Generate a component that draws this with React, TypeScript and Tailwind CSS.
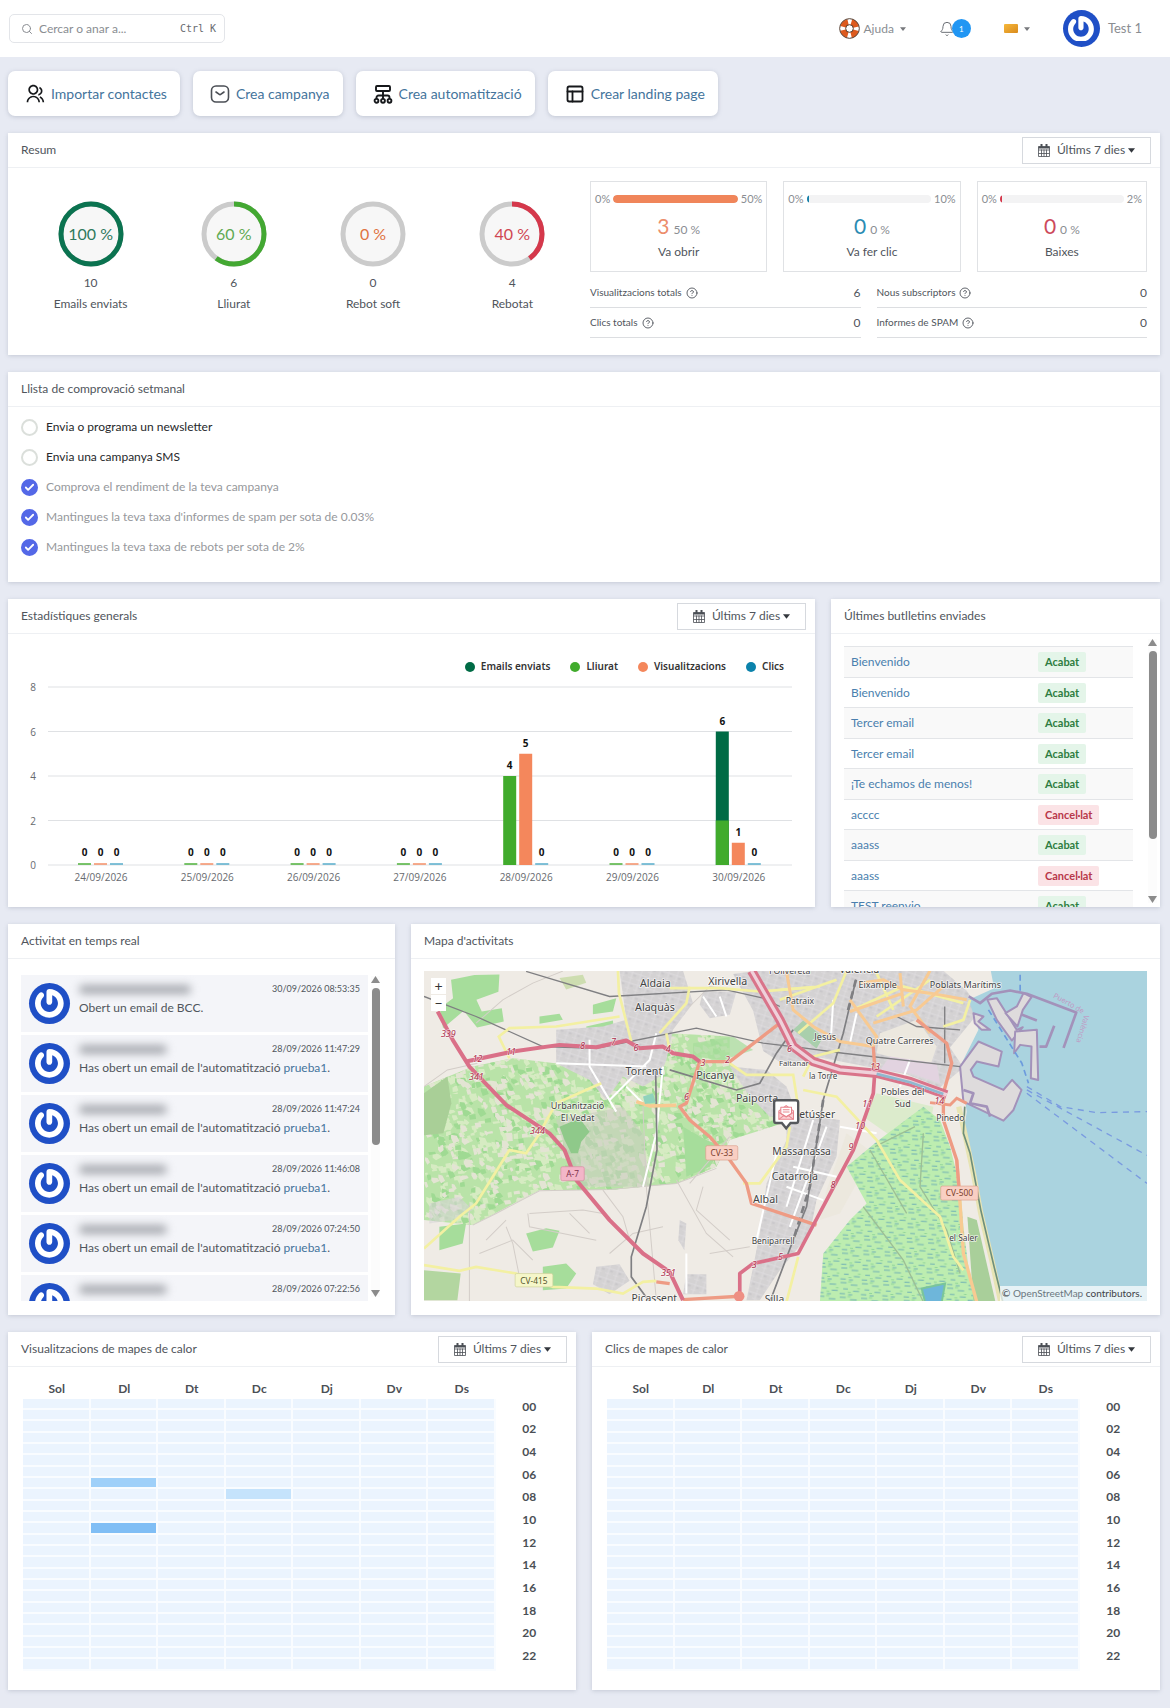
import React from "react";
import clsx from "clsx";
import { Bell, Check, CircleHelp, PanelsTopLeft, Search } from "lucide-react";
import { RiGroupLine } from "react-icons/ri";
import { SiGravatar } from "react-icons/si";

const mapFont = "'Noto Sans', sans-serif";

const gauges = [
  { label: "Emails enviats", percent: 100, total: 10, color: "#0b7350", text: "text-[#2f7a5e]" },
  { label: "Lliurat", percent: 60, total: 6, color: "#43a832", text: "text-[#5faa52]" },
  { label: "Rebot soft", percent: 0, total: 0, color: "#f0855a", text: "text-[#e0733f]" },
  { label: "Rebotat", percent: 40, total: 4, color: "#d5384b", text: "text-[#cf4653]" },
];

const rates = [
  { label: "Va obrir", max: "50%", count: 3, rate: "50 %", bar: "w-full bg-[#f0855a]", text: "text-[#ec8d6b]" },
  { label: "Va fer clic", max: "10%", count: 0, rate: "0 %", bar: "w-[2px] bg-[#1680a8]", text: "text-[#2b8bb3]" },
  { label: "Baixes", max: "2%", count: 0, rate: "0 %", bar: "w-[2px] bg-[#d5384b]", text: "text-[#cd4a5c]" },
];

const totals = [
  { label: "Visualitzacions totals", value: 6 },
  { label: "Nous subscriptors", value: 0 },
  { label: "Clics totals", value: 0 },
  { label: "Informes de SPAM", value: 0 },
];

const checklist = [
  { label: "Envia o programa un newsletter", done: false },
  { label: "Envia una campanya SMS", done: false },
  { label: "Comprova el rendiment de la teva campanya", done: true },
  { label: "Mantingues la teva taxa d'informes de spam per sota de 0.03%", done: true },
  { label: "Mantingues la teva taxa de rebots per sota de 2%", done: true },
];

const newsletters = [
  { name: "Bienvenido", ok: true },
  { name: "Bienvenido", ok: true },
  { name: "Tercer email", ok: true },
  { name: "Tercer email", ok: true },
  { name: "¡Te echamos de menos!", ok: true },
  { name: "acccc", ok: false },
  { name: "aaass", ok: true },
  { name: "aaass", ok: false },
  { name: "TEST reenvio", ok: true },
];

const activity = [
  { date: "30/09/2026 08:53:35", text: "Obert un email de BCC.", link: "" },
  { date: "28/09/2026 11:47:29", text: "Has obert un email de l'automatització ", link: "prueba1" },
  { date: "28/09/2026 11:47:24", text: "Has obert un email de l'automatització ", link: "prueba1" },
  { date: "28/09/2026 11:46:08", text: "Has obert un email de l'automatització ", link: "prueba1" },
  { date: "28/09/2026 07:24:50", text: "Has obert un email de l'automatització ", link: "prueba1" },
  { date: "28/09/2026 07:22:56", text: "Has obert un email de l'automatització ", link: "prueba1" },
];

const chartDays = [
  { date: "24/09/2026", sent: 0, delivered: 0, views: 0, clicks: 0 },
  { date: "25/09/2026", sent: 0, delivered: 0, views: 0, clicks: 0 },
  { date: "26/09/2026", sent: 0, delivered: 0, views: 0, clicks: 0 },
  { date: "27/09/2026", sent: 0, delivered: 0, views: 0, clicks: 0 },
  { date: "28/09/2026", sent: 4, delivered: 4, views: 5, clicks: 0 },
  { date: "29/09/2026", sent: 0, delivered: 0, views: 0, clicks: 0 },
  { date: "30/09/2026", sent: 6, delivered: 2, views: 1, clicks: 0 },
];

const legend = [
  { label: "Emails enviats", color: "bg-[#006b45]" },
  { label: "Lliurat", color: "bg-[#41ab2c]" },
  { label: "Visualitzacions", color: "bg-[#f4875c]" },
  { label: "Clics", color: "bg-[#0b82ab]" },
];

const weekDays = ["Sol", "Dl", "Dt", "Dc", "Dj", "Dv", "Ds"];

function Caret({ className }: { className?: string }) {
  return (
    <svg viewBox="0 0 8 5" className={clsx("shrink-0", className)} fill="currentColor" aria-hidden="true">
      <path d="M0 0h8L4 5z" />
    </svg>
  );
}

function RangeButton() {
  return (
    <button type="button" className="flex h-[27px] w-[129px] items-center justify-center border border-[#d6d9de] bg-white text-[12px] text-[#50555c]">
      <svg viewBox="0 0 12 13" className="mr-[7px] h-[13px] w-3" fill="none" stroke="#4b4f55" aria-hidden="true">
        <path d="M.5 2.500h11v10H.5zM.5 6h11M.5 9.500h11M3.500 5.500v7M6 5.500v7M8.500 5.500v7" strokeWidth=".8" />
        <path d="M.5 3.500h11" strokeWidth="2" />
        <path d="M3.500 0v4M8.500 0v4" strokeWidth="2" />
      </svg>
      Últims 7 dies
      <Caret className="ml-[3px] h-[5px] w-[7px] text-[#33373d]" />
    </button>
  );
}

type CardProps = {
  title: string;
  range?: boolean;
  className?: string;
  children: React.ReactNode;
};

function Card({ title, range, className, children }: CardProps) {
  return (
    <section className={clsx("flex min-w-0 flex-col bg-white shadow-[0_1px_4px_rgba(120,130,150,0.3)]", className)}>
      <header className="flex h-[35px] shrink-0 items-center justify-between border-b border-[#eef0f3] pr-[9px] pl-[13px]">
        <h2 className="text-[12px] text-[#50555c]">{title}</h2>
        {range && <RangeButton />}
      </header>
      {children}
    </section>
  );
}

function Avatar({ className }: { className: string }) {
  return (
    <span className={clsx("flex shrink-0 items-center justify-center rounded-full bg-[#1f4fc6] text-white", className)}>
      <SiGravatar className="h-[70%] w-[70%]" />
    </span>
  );
}

function ScrollRail({ thumb }: { thumb: string }) {
  return (
    <div className="flex w-[9px] shrink-0 flex-col items-center bg-[#fcfcfc] text-[#8b8b8b]" aria-hidden="true">
      <svg viewBox="0 0 9 7" className="h-[7px] w-[9px]" fill="currentColor">
        <path d="M4.500 0 9 7H0z" />
      </svg>
      <div className={clsx("mt-[5px] w-[8px] rounded-full bg-[#8b8b8b]", thumb)} />
      <svg viewBox="0 0 9 7" className="mt-auto h-[7px] w-[9px]" fill="currentColor">
        <path d="M0 0h9L4.500 7z" />
      </svg>
    </div>
  );
}

function TopBar() {
  return (
    <header className="flex h-[57px] items-center justify-between bg-white pr-[28px] pl-[9px] text-[13px] text-[#8a8d92]">
      <label className="flex h-[29px] w-[216px] items-center rounded-[5px] border border-[#e3e5e9] pr-2 pl-[11px]">
        <Search className="h-3 w-3 shrink-0 text-[#8a8d92]" strokeWidth={2} />
        <input
          type="text"
          aria-label="Cercar"
          placeholder="Cercar o anar a..."
          className="ml-[6px] min-w-0 flex-1 bg-transparent text-[12px] outline-none placeholder:text-[#8a8d92]"
        />
        <kbd className="font-['DejaVu_Sans_Mono',monospace] text-[10px] text-[#676b70]">Ctrl K</kbd>
      </label>
      <nav className="flex items-center">
        <button type="button" className="flex items-center text-[12px]">
          <svg viewBox="0 0 22 22" className="mr-1 h-[21px] w-[21px]" aria-hidden="true">
            <circle cx="11" cy="11" r="7" fill="none" stroke="#fff" strokeWidth="6" />
            <circle cx="11" cy="11" r="7" fill="none" stroke="#dd5a1e" strokeWidth="6" strokeDasharray="7.4 3.600" strokeDashoffset="-1.800" />
            <circle cx="11" cy="11" r="10.300" fill="none" stroke="#4d3528" strokeWidth="1" />
            <circle cx="11" cy="11" r="4" fill="none" stroke="#4d3528" strokeWidth="1" />
          </svg>
          Ajuda
          <Caret className="ml-[6px] h-1 w-[6px] text-[#77797d]" />
        </button>
        <button type="button" aria-label="Notificacions" className="ml-[33px] flex items-center">
          <Bell className="h-4 w-4 text-[#6c7076]" strokeWidth={1.5} />
          <span className="-ml-[3px] flex h-[19px] w-[19px] items-center justify-center rounded-full bg-[#2196f3] text-[8px] text-white">1</span>
        </button>
        <button type="button" aria-label="Idioma" className="ml-[33px] flex items-center">
          <span className="h-[9px] w-[14px] rounded-[1px] bg-linear-to-br from-[#f6b83a] to-[#d98a1c]" />
          <Caret className="ml-[6px] h-1 w-[6px] text-[#77797d]" />
        </button>
        <button type="button" className="ml-[33px] flex items-center">
          <Avatar className="mr-2 h-[37px] w-[37px]" />
          Test 1
        </button>
      </nav>
    </header>
  );
}

function QuickActions() {
  const action =
    "flex h-[45px] items-center gap-[6px] rounded-[7px] bg-white pr-[13px] pl-[17px] text-[14px] text-[#44749c] shadow-[0_1px_4px_rgba(120,130,150,0.35)]";
  return (
    <div className="flex gap-[13px]">
      <a href="#import" className={action}>
        <RiGroupLine className="h-5 w-5 text-[#16181b]" />
        Importar contactes
      </a>
      <a href="#campaign" className={action}>
        <svg viewBox="0 0 20 20" className="h-5 w-5" fill="none" stroke="#4b4f55" strokeWidth="1.600" strokeLinecap="round" aria-hidden="true">
          <rect x="1.500" y="2" width="17" height="16" rx="4.500" />
          <path d="m6 8 3 2.200c.6.500 1.400.5 2 0L14 8" />
        </svg>
        Crea campanya
      </a>
      <a href="#automation" className={action}>
        <svg viewBox="0 0 20 20" className="h-5 w-5" fill="none" stroke="#16181b" strokeWidth="1.900" aria-hidden="true">
          <rect x="3" y="2" width="14" height="5" rx="1" />
          <path d="M10 7v8M3.500 15v-1.500a2 2 0 0 1 2-2h9a2 2 0 0 1 2 2V15" />
          <circle cx="3.500" cy="16.800" r="1.900" />
          <circle cx="10" cy="16.800" r="1.900" />
          <circle cx="16.500" cy="16.800" r="1.900" />
        </svg>
        Crea automatització
      </a>
      <a href="#landing" className={action}>
        <PanelsTopLeft className="h-5 w-5 text-[#16181b]" strokeWidth={2.2} />
        Crear landing page
      </a>
    </div>
  );
}

function Gauge({ percent, color, text }: { percent: number; color: string; text: string }) {
  const length = 2 * Math.PI * 30;
  return (
    <div className="relative flex h-[66px] w-[66px] items-center justify-center">
      <svg viewBox="0 0 66 66" className="absolute inset-0 -rotate-90" aria-hidden="true">
        <circle cx="33" cy="33" r="30" fill="#f7f7f7" stroke="#cbcbcb" strokeWidth="5" />
        {percent > 0 && (
          <circle cx="33" cy="33" r="30" fill="none" stroke={color} strokeWidth="5" strokeDasharray={`${(length * percent) / 100} ${length}`} />
        )}
      </svg>
      <span className={clsx("relative text-[16px]", text)}>{percent} %</span>
    </div>
  );
}

function Summary() {
  return (
    <Card title="Resum" range>
      <div className="flex pt-[13px] pr-[13px] pb-[17px] pl-[9px]">
        <div className="flex flex-1 items-start justify-around pt-5">
          {gauges.map((g) => (
            <div key={g.label} className="flex flex-col items-center text-[12px] text-[#50555c]">
              <Gauge percent={g.percent} color={g.color} text={g.text} />
              <p className="mt-[6px] leading-5">{g.total}</p>
              <p className="leading-[22px]">{g.label}</p>
            </div>
          ))}
        </div>
        <div className="w-1/2 shrink-0 pl-2">
          <div className="grid grid-cols-[177fr_177fr_170fr] gap-4">
            {rates.map((r) => (
              <div key={r.label} className="flex h-[91px] flex-col items-center border border-[#e0e2e5] px-1 pt-[9px]">
                <div className="flex w-full items-center gap-[3px] text-[11px] leading-4 text-[#8a8d92]">
                  0%
                  <div className="h-2 flex-1 overflow-hidden rounded-full bg-[#f3f3f4]">
                    <div className={clsx("h-full rounded-full", r.bar)} />
                  </div>
                  {r.max}
                </div>
                <p className="mt-[7px] flex items-baseline gap-1 leading-6 text-[#8a8d92]">
                  <span className={clsx("text-[21px]", r.text)}>{r.count}</span>
                  <span className="text-[12px]">{r.rate}</span>
                </p>
                <p className="text-[12px] leading-5 text-[#50555c]">{r.label}</p>
              </div>
            ))}
          </div>
          <dl className="mt-[6px] grid grid-cols-2 gap-x-4 text-[#50555c]">
            {totals.map((t) => (
              <div key={t.label} className="flex h-[30px] items-center border-b border-[#dcdee1]">
                <dt className="flex items-center gap-1 text-[10px]">
                  {t.label}
                  <CircleHelp className="h-3 w-3" strokeWidth={1.8} />
                </dt>
                <dd className="ml-auto text-[12px]">{t.value}</dd>
              </div>
            ))}
          </dl>
        </div>
      </div>
    </Card>
  );
}

function Checklist() {
  return (
    <Card title="Llista de comprovació setmanal">
      <ul className="px-[13px] pt-[5px] pb-5 text-[12px]">
        {checklist.map((item) => (
          <li key={item.label} className="flex h-[30px] items-center">
            <label className="flex items-center gap-2">
              <span className="grid place-items-center">
                <input
                  type="checkbox"
                  defaultChecked={item.done}
                  className="peer col-start-1 row-start-1 h-[17px] w-[17px] appearance-none rounded-full border-2 border-[#dbdfdb] checked:border-[#5468e7] checked:bg-[#5468e7]"
                />
                <Check className="pointer-events-none invisible col-start-1 row-start-1 h-[11px] w-[11px] text-white peer-checked:visible" strokeWidth={4} />
              </span>
              <span className={item.done ? "text-[#96989c]" : "text-[#26282b]"}>{item.label}</span>
            </label>
          </li>
        ))}
      </ul>
    </Card>
  );
}

function Bar({ x, value, color }: { x: number; value: number; color: string }) {
  const height = value === 0 ? 2 : value * 22.25;
  return (
    <>
      <rect x={x} y={194 - height} width="13" height={height} fill={color} opacity={value === 0 ? 0.7 : 1} />
      <text x={x + 6.5} y={187 - height} textAnchor="middle" fontSize="10" fontWeight="700" fill="#111">
        {value}
      </text>
    </>
  );
}

function StatsChart() {
  return (
    <svg viewBox="0 8 781 207" className="w-full font-['Open_Sans',sans-serif]" role="img" aria-label="Estadístiques generals">
      {[8, 6, 4, 2, 0].map((tick, i) => (
        <g key={tick}>
          <path d={`M27 ${16 + i * 44.5}H771`} stroke="#dfe1e4" />
          <text x="12" y={20 + i * 44.5} textAnchor="middle" fontSize="10" fill="#66696e">
            {tick}
          </text>
        </g>
      ))}
      {chartDays.map((d, i) => {
        const center = 80 + i * 106.3;
        return (
          <g key={d.date}>
            <Bar x={center - 23} value={d.sent} color={d.sent > d.delivered ? "#006b45" : "#41ab2c"} />
            {d.sent > d.delivered && (
              <rect x={center - 23} y={194 - d.delivered * 22.25} width="13" height={d.delivered * 22.25} fill="#41ab2c" />
            )}
            <Bar x={center - 7} value={d.views} color="#f4875c" />
            <Bar x={center + 9} value={d.clicks} color="#4ba6c8" />
            <text x={center} y="210" textAnchor="middle" fontSize="10" fill="#66696e">
              {d.date}
            </text>
          </g>
        );
      })}
    </svg>
  );
}

function GeneralStats() {
  return (
    <Card title="Estadístiques generals" range className="h-[308px]">
      <div className="px-[13px] pt-5">
        <ul className="flex h-[25px] items-center justify-end gap-5 pr-[18px] font-['Noto_Sans',sans-serif] text-[10px] font-semibold text-[#333]">
          {legend.map((l) => (
            <li key={l.label} className="flex items-center gap-[6px]">
              <span className={clsx("h-[10px] w-[10px] rounded-full", l.color)} />
              {l.label}
            </li>
          ))}
        </ul>
        <StatsChart />
      </div>
    </Card>
  );
}

function LatestNewsletters() {
  return (
    <Card title="Últimes butlletins enviades" className="h-[308px]">
      <div className="flex min-h-0 flex-1 pr-[3px] pl-[13px]">
        <div className="flex-1 overflow-hidden pt-3 pr-[15px]">
          <table className="w-full text-[12px]">
            <tbody>
              {newsletters.map((n, i) => (
                <tr key={i} className="border-t border-[#e3e5e8] odd:h-[31px] odd:bg-[#f9f9f9] even:h-[30px]">
                  <td className="py-0 pl-[7px]">
                    <a href="#newsletter" className="text-[#4a7fae]">
                      {n.name}
                    </a>
                  </td>
                  <td className="w-[95px] py-0">
                    <span
                      className={clsx(
                        "inline-block rounded-[2px] px-[7px] text-[11px] leading-5 font-bold",
                        n.ok ? "bg-[#e4f5e9] text-[#2e7d41]" : "bg-[#fbe3e6] text-[#b8384a]"
                      )}
                    >
                      {n.ok ? "Acabat" : "Cancel·lat"}
                    </span>
                  </td>
                </tr>
              ))}
            </tbody>
          </table>
        </div>
        <div className="flex pt-[5px] pb-1">
          <ScrollRail thumb="h-[188px]" />
        </div>
      </div>
    </Card>
  );
}

function LiveActivity() {
  return (
    <Card title="Activitat en temps real" className="h-[391px]">
      <div className="flex min-h-0 flex-1 pt-4 pr-[15px] pb-[14px] pl-[13px]">
        <ul className="min-w-0 flex-1 overflow-hidden">
          {activity.map((a) => (
            <li key={a.date} className="mb-[3px] flex h-[57px] bg-[#f4f5f9] pt-2 pr-2 pl-2">
              <Avatar className="h-[41px] w-[41px]" />
              <div className="min-w-0 flex-1 pl-[9px] text-[#50555c]">
                <div className="flex items-center justify-between">
                  <span className={clsx("h-[9px] rounded-full bg-[#a6a9af] blur-[4px]", a.link ? "w-[88px]" : "w-[112px]")} />
                  <time className="text-[9px] leading-3">{a.date}</time>
                </div>
                <p className="mt-[3px] text-[12px] leading-5">
                  {a.text}
                  {a.link && (
                    <>
                      <a href="#prueba1" className="text-[#44749c]">{a.link}</a>.
                    </>
                  )}
                </p>
              </div>
            </li>
          ))}
        </ul>
        <div className="flex pt-px pb-1 pl-[3px]">
          <ScrollRail thumb="h-[157px]" />
        </div>
      </div>
    </Card>
  );
}

// fixed seed so that fields fall on the same spots on every render
function scatter(count: number, seed: number, box: number[]) {
  let s = seed;
  const next = () => {
    s = (s * 16807) % 2147483647;
    return s / 2147483647;
  };
  return Array.from({ length: count }, () => {
    const x = Math.round(box[0] + next() * box[2]);
    const y = Math.round(box[1] + next() * box[3]);
    const a = Math.round(6 + next() * 14);
    const b = Math.round(5 + next() * 12);
    const c = Math.round(next() * 10);
    return `M${x} ${y}l${a} ${c - 5}l${c} ${b}l${-a} ${c}l${-c} ${-b}z`;
  }).join("");
}

const fieldsLight = scatter(1100, 77, [44, 330, 1060, 640]);
const fieldsCream = scatter(600, 1234, [44, 330, 1060, 640]);
const fieldsDark = scatter(550, 991, [44, 330, 1060, 640]);

const places: [string, number, number, number][] = [
  ["Aldaia", 737, 203, 32],
  ["Xirivella", 954, 195, 32],
  ["Alaquàs", 736, 273, 32],
  ["Torrent", 703, 464, 32],
  ["Picanya", 917, 477, 32],
  ["Paiporta", 1042, 546, 32],
  ["Urbanització", 504, 568, 27],
  ["El Vedat", 504, 604, 27],
  ["Massanassa", 1175, 705, 31],
  ["Catarroja", 1155, 780, 32],
  ["Albal", 1067, 849, 32],
  ["Beniparrell", 1090, 973, 25],
  ["Picassent", 734, 1146, 31],
  ["Silla", 1094, 1148, 31],
  ["l'Olivereta", 1140, 162, 26],
  ["València", 1348, 160, 31],
  ["Patraix", 1170, 253, 26],
  ["Eixample", 1403, 205, 27],
  ["Poblats Marítims", 1666, 205, 27],
  ["Jesús", 1246, 359, 27],
  ["Quatre Carreres", 1469, 371, 27],
  ["Faitanar", 1152, 439, 23],
  ["la Torre", 1240, 477, 24],
  ["Pobles del", 1478, 525, 27],
  ["Sud", 1478, 560, 27],
  ["etússer", 1222, 593, 31],
  ["Pinedo", 1621, 603, 26],
  ["el Saler", 1660, 962, 25],
];

const exits: [string, number, number][] = [
  ["339", 117, 350],
  ["12", 204, 427],
  ["341", 201, 480],
  ["11", 305, 405],
  ["8", 519, 387],
  ["7", 612, 375],
  ["6", 679, 393],
  ["4", 776, 396],
  ["3", 880, 437],
  ["2", 953, 428],
  ["6", 830, 540],
  ["344", 384, 641],
  ["351", 776, 1066],
  ["3", 1033, 1042],
  ["5", 1112, 1020],
  ["6", 1139, 395],
  ["13", 1395, 450],
  ["11", 1372, 562],
  ["10", 1350, 628],
  ["9", 1323, 690],
  ["8", 1269, 804],
  ["14", 1588, 552],
];

const shields = [
  { label: "A-7", x: 454, y: 740, w: 70, h: 42, fill: "#f3b6c8", stroke: "#d98aa2", text: "#80304a" },
  { label: "CV-33", x: 888, y: 677, w: 96, h: 43, fill: "#f9cfc3", stroke: "#dba08d", text: "#7a3d2c" },
  { label: "CV-415", x: 317, y: 1060, w: 113, h: 40, fill: "#f5f6c9", stroke: "#cfd19a", text: "#55572c" },
  { label: "CV-500", x: 1592, y: 798, w: 112, h: 42, fill: "#f9cfc3", stroke: "#dba08d", text: "#7a3d2c" },
];

function StreetMap() {
  return (
    <svg viewBox="44 153 2166 990" preserveAspectRatio="xMidYMid slice" className="h-full w-full" role="img" aria-label="Mapa de València">
      <defs>
        <clipPath id="orchard">
          <path d="M44 500 190 440 310 415 520 440 590 500 700 420 780 340 960 350 960 430 1010 480 1120 560 1150 600 960 660 920 740 800 790 600 810 390 810 190 915 44 900Z" />
        </clipPath>
        <pattern id="streets" width="26" height="32" patternUnits="userSpaceOnUse" patternTransform="rotate(18)">
          <rect width="26" height="32" fill="#d4d2d3" />
          <path d="M0 8h26M9 0v32M0 24h16" stroke="#e0dedf" strokeWidth="2" />
          <path d="M14 12h8v6h-8z" fill="#cac8cb" />
        </pattern>
        <pattern id="marsh" width="64" height="44" patternUnits="userSpaceOnUse" patternTransform="rotate(3)">
          <rect width="64" height="44" fill="#bdedb0" />
          <path d="M3 6h18M34 12h20M12 24h14M42 30h18M2 39h16M28 41h12" stroke="#6fb0b4" strokeWidth="3" />
          <path d="M26 3h10M54 22h8M26 34h9" stroke="#92d69a" strokeWidth="3" />
        </pattern>
      </defs>

      <rect x="44" y="153" width="2166" height="992" fill="#efebe5" />

      {/* orchards and woods */}
      <g clipPath="url(#orchard)">
        <rect x="44" y="330" width="1110" height="600" fill="#b9e3a8" />
        <path d={fieldsLight} fill="#d6ebc2" />
        <path d={fieldsDark} fill="#9fda93" />
        <path d={fieldsCream} fill="#e3e4d3" />
        <path d="M440 600 640 560 700 640 720 800 520 800 470 700Z" fill="#c9cfbf" opacity=".6" />
      </g>
      <g fill="#a6dd9b">
        <path d="M125 180l70-14 75-2-3 52-66 24 16 35 60-10 6 40-80 18-40-50-62 52-10-60 40-30z" />
        <path d="M550 255l70-20-10 40-60 8zM390 290l60-8 10 18-70 12zM530 320l80-18 2 24-80 10z" />
        <path d="M350 940l60-16 40 8-20 50-60 12z" />
        <path d="M90 920l80-10-10 60-70 20zM400 1040l70-10 30 30-30 45-70 5z" />
        <path d="M820 620l70 40 50 20-40 60-70 30z" />
        <path d="M850 370l120-20 60 40-90 30-90-10z" opacity=".7" />
      </g>
      <path d="M44 520l70-50 12 80-24 90-58 6z" fill="#a9cf97" />
      <path d="M450 620l60-25 30 40-25 30-10 35h-20l-20-40z" fill="#8fc98a" />
      <path d="M44 1050l110 10-10 80H44z" fill="#b3d6a0" />
      <path d="M450 175l70-10 10 24-60 20z" fill="#cdddb0" />

      {/* built-up areas */}
      <g fill="url(#streets)">
        <path d="M630 153H820L850 250 790 330 770 420 750 470 700 500 640 470 590 540 540 480 440 430 440 330 580 320 650 300Z" />
        <path d="M880 215h100l-20 70-60 10-30-40z" />
        <path d="M1040 153H1600l70 60 40 60-90 110 40 60-70 60-100-40-260-50-110 20-60-40-30-120-60-110z" />
        <path d="M960 440l110 10 60 50 30 80-80 10-60-60z" />
        <path d="M1130 580l160 20-10 110-60 130-20 100-90 110-60 90h-40l40-200 20-150 60-130z" />
        <path d="M830 1062h60v60h-70zM560 1040l70-8 30 50-60 40-50-30z" />
        <path d="M60 850l90-20 40 40-60 30-70 10z" opacity=".6" />
        <path d="M810 900l20 10-6 80-18-30z" />
      </g>

      {/* parks and light fields near the city */}
      <path d="M1410 340l110-40 60 80-20 60-160-40z" fill="#ece8df" />
      <path d="M1150 330l30-28 60 50-20 34z" fill="#a9cfac" />
      <path d="M1440 410l140 20 10 60-90-30-90-10z" fill="#e2d3e0" />
      <path d="M1400 520l170 40-10 60-100 40-100-70z" fill="#dcebcc" />
      <path d="M1310 640l80 60-100 180-60 20 20-90z" fill="#ece8de" />

      {/* marsh */}
      <path d="M1310 740 1400 665 1460 620 1540 560 1590 600 1620 680 1650 800 1660 920 1680 1080 1700 1145 1230 1145 1240 1000 1320 900 1370 850Z" fill="url(#marsh)" />
      <path d="M1395 680l120-60M1380 690l110 190M1360 860l120 160 60 125M1540 640l-10 160 80 130 40 130" stroke="#9dbf95" strokeWidth="4" fill="none" />
      <path d="M1535 1105l70-15-10 55h-50z" fill="#6eb6da" stroke="#7ac59a" strokeWidth="6" />

      {/* sea and coast */}
      <path d="M1742 153 1752 205 1676 240 1705 330 1650 440 1670 575 1660 640 1680 700 1710 870 1750 1040 1776 1145H2210V153Z" fill="#aad3df" />
      <path d="M1646 560 1664 640 1690 760 1712 880 1745 1020 1772 1145" stroke="#e7e4b4" strokeWidth="16" fill="none" />
      <path d="M1664 560 1660 640 1680 700 1712 870 1752 1040 1778 1145" stroke="#6f8f7a" strokeWidth="5" fill="none" />
      <path d="M1672 890 1700 900 1756 1145 1690 1145Z" fill="#a9cf9a" />

      {/* harbour */}
      <g fill="#dedbdc" stroke="#a392ba" strokeWidth="6" strokeLinejoin="round">
        <path d="M1732 240 1760 235 1820 330 1838 322 1805 362 1760 300Z" />
        <path d="M1786 280 1820 260 1840 220 1864 232 1838 270 1822 320Z" />
        <path d="M1690 280 1720 290 1705 305 1740 330 1715 330 1694 310Z" />
        <path d="M1650 440 1705 365 1775 395 1765 440 1700 425 1682 450 1690 470 1780 510 1806 480 1834 510 1810 570 1780 602 1660 545Z" />
        <path d="M1815 335 1880 330 1884 480 1862 475 1864 380 1830 375 1812 400Z" />
      </g>
      <g fill="none" stroke="#a392ba" strokeWidth="8" strokeLinejoin="round">
        <path d="M1676 230 1710 250 1745 222 1800 212 1850 222 1998 278 1960 384" />
        <path d="M1834 284 1880 302M1932 318 1908 380 1888 380" />
        <path d="M1660 510 1690 520 1680 550 1730 560 1740 590" />
      </g>
      <path d="M1830 165v60M1735 270l100 160 20 60" stroke="#6c9bdd" strokeWidth="5" strokeDasharray="18 12" fill="none" />
      <path d="M1850 500 1950 560 2060 578 2210 575M1850 510 2210 706M1850 520 2210 790" stroke="#7a9be0" strokeWidth="4" strokeDasharray="18 16" fill="none" />
      <path id="pier" d="M1928 232 2022 285 1995 375" fill="none" />
      <text fontSize="22" fill="#c099c4" fontFamily={mapFont}>
        <textPath href="#pier">Puerto de València</textPath>
      </text>

      {/* minor roads */}
      <g fill="none" stroke="#d3cdc8" strokeWidth="3">
        <path d="M190 915 260 880 390 812 600 808 800 790 920 745M290 920l20 50 20 100M360 880l160-10 60 10M355 880l5 40 200 40M580 810l60 80 20 70M800 780l90 160 80 70M880 800l-20 70 100 90M210 1000l100-40 60 60M180 850v295M700 560l10 240 30 340M960 650l-120 140M230 960l60-60M480 880l60 60" />
        <path d="M200 310l80-70 90-50 90-36M44 500l70-50 90-20M840 260l60-60 60 10M600 1000l70-60 90-20M900 1000l120-20" />
      </g>
      <g fill="none" stroke="#fff" strokeWidth="6">
        <path d="M540 360v80l80 135M600 540l120-120 20-80M650 500l50 50M760 440l-20 200-40 160M440 430l270 10M1210 600l-80 260M1250 620l-110 300M1130 800l110 40M1150 740l130 30M880 230l40 60M930 230l20 60M1100 700l-60 260M830 1000v120M1320 370l20-90M1500 420l-30 80M1270 240l-6 100M1290 620l110 20" />
      </g>

      {/* railways */}
      <g fill="none" stroke="#7f7f82">
        <path d="M350 155 600 230 950 210 1060 235 1110 260M44 230 200 290 400 380 560 385 860 325 1060 370 1180 384 1300 400 1650 440" strokeWidth="4" />
        <path d="M738 450 742 690 710 860 665 1010 665 1070 720 1145M780 450 980 510 1050 490 1100 400 1150 330" strokeWidth="5" />
        <path d="M1338 180 1300 340 1240 540 1225 640 1190 860 1150 960 1080 1145" strokeWidth="5" />
        <path d="M1338 180 1312 280M1240 540 1200 800 1150 960" strokeWidth="8" strokeDasharray="22 14" />
        <path d="M1604 260v170M1460 290l60 30 130 10" strokeWidth="4" />
      </g>

      {/* yellow roads */}
      <g fill="none" stroke="#f3f0a2" strokeWidth="8">
        <path d="M625 153 628 220 665 365M630 290 440 320 300 325 268 350 290 395 300 415M840 200 830 250 750 340M780 205h150l120 10 150-12M770 340l10 50M575 490 440 550 384 650 350 700 300 690 200 850 150 890 44 985" />
        <path d="M44 1035 150 1052 200 1040 320 1060 430 1100 560 1105 640 1120 700 1085 740 1082M960 430 1010 465 1150 465 1165 560M1140 620 1130 680 1050 790 1000 790" />
        <path d="M1165 340 1270 250 1310 153M1180 470 1210 410 1290 390M1180 510 1280 530 1400 660 1470 780 1590 890 1630 1010 1660 1050M1165 1010 1130 1145" />
        <path d="M1110 210 1230 200M1110 240 1280 180M1330 270 1480 200 1660 250M1400 290 1560 180M1450 270 1400 160M1600 320 1660 300 1680 240" />
      </g>

      {/* orange roads */}
      <g fill="none" stroke="#f8ca92" strokeWidth="9">
        <path d="M1130 155 1150 270 1210 320 1290 365 1390 380M1320 240 1400 350 1390 380M1350 190 1420 180 1480 210 1560 220 1670 240M1320 275 1480 220M1390 310 1520 270 1600 200M1470 160 1480 260M1560 153 1500 260 1560 340" />
        <path d="M680 545 720 558 800 556M1640 720 1650 850 1660 1000 1700 1145" strokeWidth="10" />
      </g>

      {/* trunk roads */}
      <g fill="none" stroke="#ee9b84" strokeWidth="10" strokeLinejoin="round">
        <path d="M870 425 960 425 1110 310M870 425 830 550 810 560 840 600 900 650 960 720 1010 790 1025 850 1220 915M740 1085 780 1090M820 1138 990 1128" />
        <path d="M1520 300 1610 370 1625 430 1600 520 1600 600 1640 720 1650 840M1390 380 1395 450" />
      </g>

      {/* motorways */}
      <g fill="none" stroke="#da7088" strokeWidth="12" strokeLinejoin="round">
        <path d="M85 275 130 360 180 440 290 555 420 640 465 690 500 780 600 900 700 1000 780 1055 820 1140" />
        <path d="M170 425 310 395 450 375 560 382 650 362 690 385 760 380 790 400 850 410 870 425" />
        <path d="M990 1135 990 1060 1030 1030 1165 1000 1330 690 1390 520 1395 450" strokeWidth="11" />
      </g>
      <g fill="none" stroke="#d9748a">
        <path d="M1025 153 1110 300 1150 380 1210 425 1290 450 1400 460 1500 485 1610 525" strokeWidth="28" />
        <path d="M1025 153 1110 300 1150 380 1210 425 1290 450 1400 460 1500 485 1610 525" stroke="#efd1da" strokeWidth="10" />
        <path d="M1400 462 1500 487 1600 522" stroke="#8fb8cf" strokeWidth="8" />
      </g>
      <path d="M1560 548 1620 555 1640 535 1670 550" stroke="#ee9b84" strokeWidth="9" fill="none" />
      <circle cx="988" cy="1128" r="16" fill="#ee8f83" />
      <path d="M700 530l30-10 8 28-32 4z" fill="#8fd3bb" />

      <g fontFamily={mapFont} fill="#444" textAnchor="middle" stroke="#fff" strokeWidth="5" strokeOpacity=".7" paintOrder="stroke" strokeLinejoin="round">
        {places.map(([name, x, y, size]) => (
          <text key={name} x={x} y={y} fontSize={size}>
            {name}
          </text>
        ))}
      </g>
      <g fontFamily={mapFont} fill="#ab2f4c" fontSize="27" fontStyle="italic" textAnchor="middle" stroke="#fff" strokeWidth="4" strokeOpacity=".6" paintOrder="stroke">
        {exits.map(([name, x, y]) => (
          <text key={`${name}-${x}`} x={x} y={y}>
            {name}
          </text>
        ))}
      </g>
      {shields.map((s) => (
        <g key={s.label}>
          <rect x={s.x} y={s.y} width={s.w} height={s.h} rx="5" fill={s.fill} stroke={s.stroke} strokeWidth="2" />
          <text x={s.x + s.w / 2} y={s.y + 30} fontSize="25" fontFamily={mapFont} fill={s.text} textAnchor="middle">
            {s.label}
          </text>
        </g>
      ))}

      {/* opened email marker */}
      <path d="M1100 541h58q7 0 7 7v54q0 7-7 7h-16l-13 16-13-16h-16q-7 0-7-7v-54q0-7 7-7z" fill="#fff" stroke="#55585c" strokeWidth="7" />
      <g fill="#fbd3d6" stroke="#e8858e" strokeWidth="3" strokeLinejoin="round">
        <path d="M1107 573l22-16 22 16v25h-44z" />
        <path d="M1113 562h32v18l-16 10-16-10z" fill="#fff" />
        <path d="M1107 577l22 14 22-14M1107 598l16-12M1151 598l-16-12M1119 569h20M1119 576h20" fill="none" />
      </g>
    </svg>
  );
}

function ActivityMap() {
  return (
    <Card title="Mapa d'activitats" className="h-[391px]">
      <div className="relative mx-[13px] mt-3 h-[330px] overflow-hidden">
        <StreetMap />
        <div className="absolute top-[7px] left-[7px] flex flex-col gap-px text-[14px] leading-4 text-[#333]">
          <button type="button" aria-label="Apropar" className="h-4 w-[15px] bg-white">+</button>
          <button type="button" aria-label="Allunyar" className="h-4 w-[15px] bg-white">−</button>
        </div>
        <p className="absolute right-0 bottom-0 bg-white/70 pr-[5px] pl-[2px] text-[10px] leading-[15px] text-[#3e4247]">
          © <a href="#osm" className="text-[#6b7780]">OpenStreetMap</a> contributors.
        </p>
      </div>
    </Card>
  );
}

function Heatmap({ title, hits = {} }: { title: string; hits?: Record<string, string> }) {
  return (
    <Card title={title} range>
      <div className="pt-3 pr-[13px] pb-[19px] pl-[15px] text-[#4b4f55]">
        <table className="w-full table-fixed border-separate border-spacing-0 text-[12px] font-bold">
          <thead>
            <tr className="h-5">
              {weekDays.map((day) => (
                <th key={day} className="p-0 leading-5">{day}</th>
              ))}
              <td className="p-0" />
            </tr>
          </thead>
          <tbody>
            {Array.from({ length: 24 }, (_, hour) => (
              <tr key={hour} className="h-[11px] nth-[3n]:h-[12px]">
                {weekDays.map((day) => (
                  <td
                    key={day}
                    className={clsx("border-r-2 border-b-2 border-[#f9fcff] p-0", hits[`${day}-${hour}`] ?? "bg-[#ebf4fe]")}
                  />
                ))}
                {hour % 2 === 0 && (
                  <th rowSpan={2} scope="rowgroup" className="p-0 align-top leading-4">
                    {String(hour).padStart(2, "0")}
                  </th>
                )}
              </tr>
            ))}
          </tbody>
        </table>
      </div>
    </Card>
  );
}

export default function App() {
  return (
    <div className="min-h-screen bg-[#e7eaf3] font-[Lato,'Open_Sans',sans-serif]">
      <TopBar />
      <main className="flex flex-col gap-[17px] pt-[14px] pr-[10px] pb-[17px] pl-2">
        <QuickActions />
        <Summary />
        <Checklist />
        <div className="grid grid-cols-[807fr_329fr] gap-4">
          <GeneralStats />
          <LatestNewsletters />
        </div>
        <div className="grid grid-cols-[387fr_749fr] gap-4">
          <LiveActivity />
          <ActivityMap />
        </div>
        <div className="grid grid-cols-2 gap-4">
          <Heatmap
            title="Visualitzacions de mapes de calor"
            hits={{ "Dl-7": "bg-[#9fd0f9]", "Dc-8": "bg-[#c5e3fc]", "Dl-11": "bg-[#80bef5]" }}
          />
          <Heatmap title="Clics de mapes de calor" />
        </div>
      </main>
    </div>
  );
}
